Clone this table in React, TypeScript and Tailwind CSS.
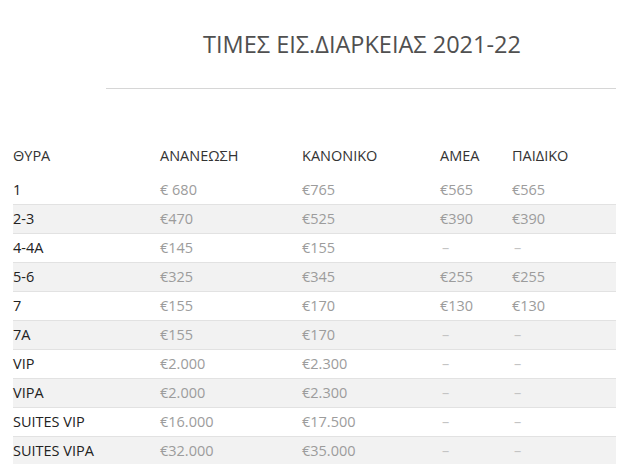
import React from "react";

const rows: [string, string, string, string, string][] = [
  ["1", "€ 680", "€765", "€565", "€565"],
  ["2-3", "€470", "€525", "€390", "€390"],
  ["4-4A", "€145", "€155", "–", "–"],
  ["5-6", "€325", "€345", "€255", "€255"],
  ["7", "€155", "€170", "€130", "€130"],
  ["7A", "€155", "€170", "–", "–"],
  ["VIP", "€2.000", "€2.300", "–", "–"],
  ["VIPA", "€2.000", "€2.300", "–", "–"],
  ["SUITES VIP", "€16.000", "€17.500", "–", "–"],
  ["SUITES VIPA", "€32.000", "€35.000", "–", "–"],
];

const cols = "grid grid-cols-[147px_142px_138px_72px_104px]";

export default function App() {
  return (
    <div className="w-[620px] h-[464px] overflow-hidden bg-white" style={{ fontFamily: '"Open Sans", sans-serif' }}>
      <div className="pt-[28px] pl-[106px] pr-[4px]">
        <h1 className="text-center text-[23.5px] leading-[32px] text-[#505050] pl-[2px]">ΤΙΜΕΣ ΕΙΣ.ΔΙΑΡΚΕΙΑΣ 2021-22</h1>
        <div className="mt-[28px] h-px bg-[#d6d6d6]" />
      </div>
      <div className="ml-[13px] w-[603px] mt-[52px]">
        <div className={`${cols} h-[30px] items-center text-[14.5px] text-[#333]`}>
          <div>ΘΥΡΑ</div>
          <div>ΑΝΑΝΕΩΣΗ</div>
          <div>ΚΑΝΟΝΙΚΟ</div>
          <div>ΑΜΕΑ</div>
          <div>ΠΑΙΔΙΚΟ</div>
        </div>
        <div className="h-[4px]" />
        {rows.map((r, i) => (
          <div
            key={i}
            className={`${cols} h-[29px] items-center text-[14.5px] ${i === 0 ? "" : "border-t border-[#e2e2e2]"} ${i % 2 === 1 ? "bg-[#f2f2f2]" : "bg-white"}`}
          >
            <div className="text-[#222]">{r[0]}</div>
            <div className="text-[#9c9c9c]">{r[1]}</div>
            <div className="text-[#9c9c9c]">{r[2]}</div>
            <div className={r[3] === "–" ? "text-[#c4c4c4] pl-[2px]" : "text-[#9c9c9c]"}>{r[3]}</div>
            <div className={r[4] === "–" ? "text-[#c4c4c4] pl-[2px]" : "text-[#9c9c9c]"}>{r[4]}</div>
          </div>
        ))}
      </div>
    </div>
  );
}
